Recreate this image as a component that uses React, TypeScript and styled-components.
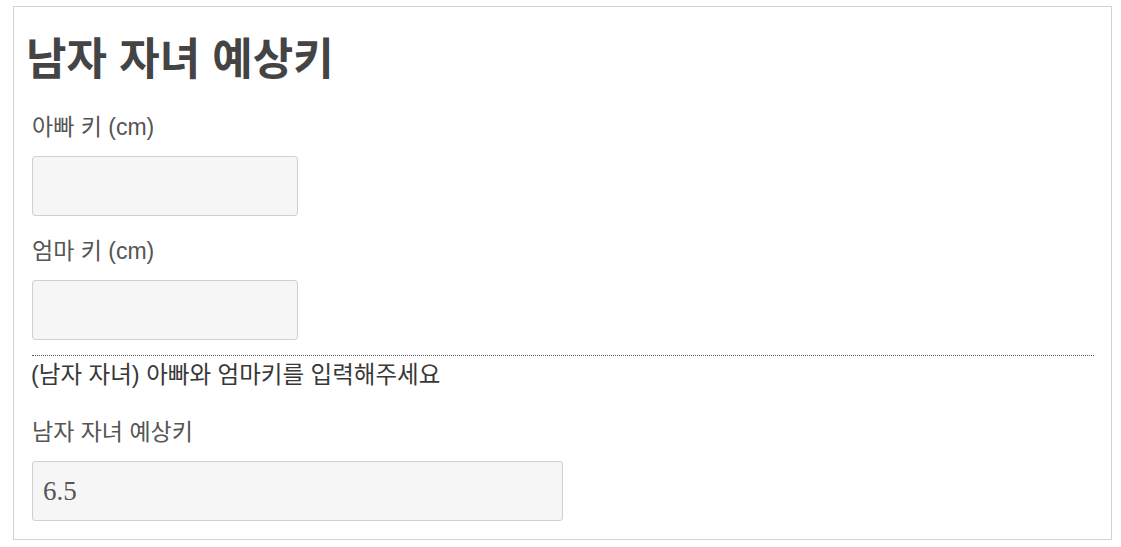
import React from "react";
import styled, { createGlobalStyle } from "styled-components";

const Global = createGlobalStyle`
  html, body { margin: 0; padding: 0; background: #fff; }
  body { font-family: "Liberation Sans", "Noto Sans CJK KR", sans-serif; color: #444; }
`;

const Card = styled.section`
  box-sizing: border-box;
  width: 1099px;
  height: 534px;
  margin: 6px 0 0 13px;
  border: 1px solid #d3d3d3;
  padding: 23px 17px 0 18px;
`;

const Title = styled.h1`
  margin: 0 0 22px -6px;
  font-size: 44px;
  line-height: 60px;
  font-weight: 700;
  color: #444;
`;

const Field = styled.div<{ $mb?: number }>`
  display: flex;
  flex-direction: column;
  align-items: flex-start;
  margin-bottom: ${(p) => p.$mb ?? 20}px;
`;

const Label = styled.label`
  font-size: 23px;
  line-height: 30px;
  color: #555;
  margin: 0 0 14px 0;
`;

const Box = styled.input<{ $w: number }>`
  box-sizing: border-box;
  width: ${(p) => p.$w}px;
  height: 60px;
  margin: 0;
  background-color: #f6f6f6;
  border: 1px solid #d0d0d0;
  border-radius: 3px;
  padding: 0 10px;
  font-family: "Liberation Serif", "DejaVu Serif", serif;
  font-size: 27px;
  color: #555;
  outline: none;
`;

const Divider = styled.hr`
  margin: 0;
  border: 0;
  border-top: 1px dotted #555;
`;

const Hint = styled.p`
  margin: 4px 0 27px -1px;
  font-size: 23.5px;
  line-height: 30px;
  color: #383838;
`;

export default function App() {
  return (
    <>
      <Global />
      <Card>
        <Title>남자 자녀 예상키</Title>
        <Field>
          <Label>아빠 키 (cm)</Label>
          <Box $w={266} type="text" />
        </Field>
        <Field $mb={15}>
          <Label>엄마 키 (cm)</Label>
          <Box $w={266} type="text" />
        </Field>
        <Divider />
        <Hint>(남자 자녀) 아빠와 엄마키를 입력해주세요</Hint>
        <Field>
          <Label>남자 자녀 예상키</Label>
          <Box $w={531} type="text" readOnly value="6.5" />
        </Field>
      </Card>
    </>
  );
}
